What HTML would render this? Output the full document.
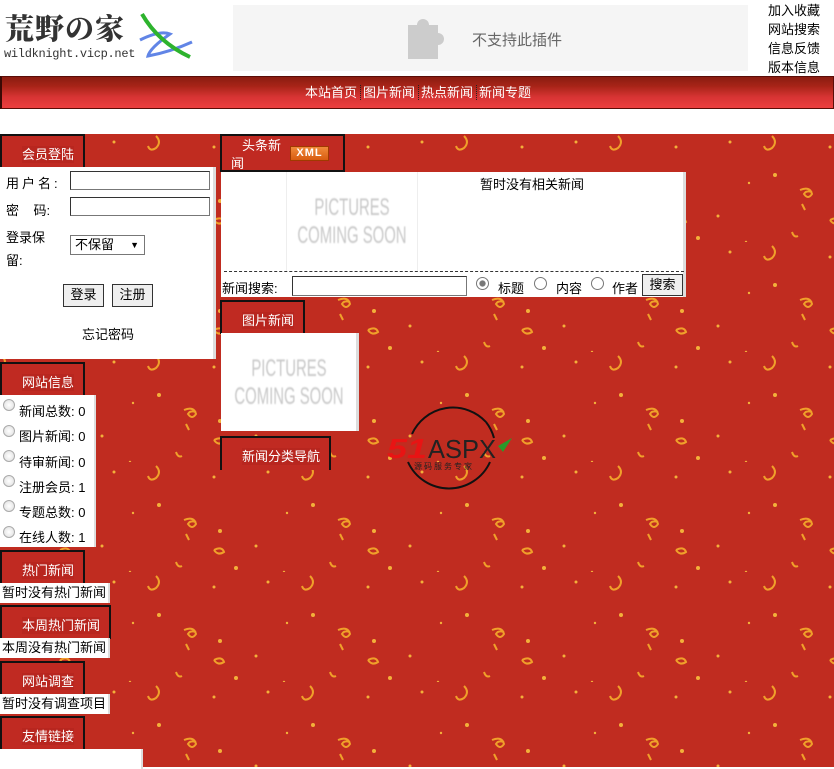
<!DOCTYPE html>
<html><head><meta charset="utf-8">
<style>
*{margin:0;padding:0;box-sizing:border-box}
body{width:834px;height:767px;overflow:hidden;position:relative;background:#fff;font-family:"Liberation Sans","Noto Sans CJK SC",sans-serif;font-size:13px;color:#000}
.abs{position:absolute}
.nav{left:0;top:76px;width:834px;height:33px;background:linear-gradient(#8a1c10,#a82418 30%,#d83434 65%,#ec3e3e);border:1px solid #5a0d08;border-left:2px solid #3a0a05;color:#fff;text-align:center;line-height:32px;font-size:13px}
.nav span{padding:0 2px;border-left:1px dotted #222;margin-left:1px}
.nav span:first-child{border:none}
.tab{background:#c02a22;border:2px solid #111;border-bottom:none;color:#fff;font-size:13px}
.tab b{font-weight:normal;background:#b8261f;padding:1px 0}
.wbox{background:#fff;border-right:3px solid #ddd}
input.t{position:absolute;height:19px;border:1px solid #333;border-right-color:#777;border-bottom-color:#777;background:#fff}
.btn{position:absolute;background:#efefef;border:1px solid #333;font-size:13px;text-align:center;line-height:20px}
.rad{position:absolute;width:12px;height:12px;border-radius:50%;border:1px solid #aaa;background:radial-gradient(#fff,#ddd)}
.pic{color:#c8c8c8;font-family:"Liberation Sans Narrow","Liberation Sans",sans-serif;text-align:center;filter:blur(0.7px);font-size:24px;line-height:28px;white-space:nowrap;transform:scaleX(0.62);transform-origin:center;width:200px}
</style></head><body>

<div class="abs" style="left:5px;top:11px;font-family:'Noto Serif CJK SC',serif;font-size:29px;font-weight:900;color:#333;letter-spacing:1px;line-height:34px">荒野の家</div>
<div class="abs" style="left:4px;top:47px;font-family:'Liberation Mono',monospace;font-size:12px;color:#333;letter-spacing:-0.3px">wildknight.vicp.net</div>
<svg class="abs" style="left:130px;top:12px" width="65" height="50"><path d="M10 28 Q30 18 40 22 Q20 36 18 44 Q40 40 62 30" stroke="#3a66e0" stroke-width="3" fill="none" opacity=".8"/><path d="M12 2 Q28 30 60 45" stroke="#2db32d" stroke-width="4" fill="none"/></svg>

<div class="abs" style="left:233px;top:5px;width:515px;height:66px;background:#f5f5f5"></div>
<svg class="abs" style="left:406px;top:13px" width="50" height="50" viewBox="0 0 50 50"><path d="M2 12 H11 A6 6 0 1 1 23 12 H32 V20 A6 6 0 1 1 32 32 V46 H2 Z" fill="#ccc"/></svg>
<div class="abs" style="left:472px;top:29px;font-size:15px;color:#666">不支持此插件</div>
<div class="abs" style="left:768px;top:1px;font-size:13px;line-height:19px">加入收藏<br>网站搜索<br>信息反馈<br>版本信息</div>

<div class="abs nav"><span>本站首页</span><span>图片新闻</span><span>热点新闻</span><span>新闻专题</span></div>

<svg class="abs" style="left:0;top:134px" width="834" height="633">
<defs><pattern id="p" width="154" height="110" patternUnits="userSpaceOnUse" x="-10" y="-2">
<rect width="154" height="110" fill="#c02c20"/>
<g stroke="#f0a02a" stroke-width="2" fill="none">
<path d="M12 4 q6 6 0 12 q-6 4 -8 -2"/>
<path d="M40 58 q10 -4 12 4 q-4 6 -8 0 q2 -4 8 -2"/>
<path d="M70 88 q8 -4 10 2 q-6 4 -10 -2"/>
<path d="M32 100 q2 6 6 4"/>
<path d="M42 72 l3 6"/>
</g>
<g fill="#f3b03a"><circle cx="70" cy="15" r="1.5"/><circle cx="15" cy="43" r="2"/><circle cx="76" cy="69" r="2"/><circle cx="112" cy="84" r="1.5"/><circle cx="143" cy="51" r="1.2"/><circle cx="92" cy="106" r="2"/><circle cx="124" cy="10" r="1.5"/><circle cx="140" cy="110" r="1.2"/></g>
</pattern></defs>
<rect width="834" height="633" fill="url(#p)"/>
</svg>

<div class="abs tab" style="left:0;top:134px;width:85px;height:34px;padding:8px 0 0 20px"><b>会员登陆</b></div>
<div class="abs wbox" style="left:0;top:167px;width:216px;height:192px"></div>
<div class="abs" style="left:6px;top:173px;font-size:13px;letter-spacing:3px">用户名:</div>
<input class="t" style="left:70px;top:171px;width:140px">
<div class="abs" style="left:6px;top:200px;font-size:13px">密&nbsp;&nbsp;&nbsp;&nbsp;码:</div>
<input class="t" style="left:70px;top:197px;width:140px">
<div class="abs" style="left:6px;top:226px;font-size:13px;line-height:23px;width:50px">登录保<br>留:</div>
<div class="abs" style="left:70px;top:235px;width:75px;height:20px;border:1px solid #777;background:#fff;font-size:13px;line-height:18px;padding-left:4px">不保留<span style="position:absolute;right:5px;font-size:9px">&#9660;</span></div>
<div class="btn" style="left:63px;top:284px;width:41px;height:23px">登录</div>
<div class="btn" style="left:112px;top:284px;width:41px;height:23px">注册</div>
<div class="abs" style="left:82px;top:324px;font-size:13px">忘记密码</div>

<div class="abs tab" style="left:0;top:362px;width:85px;height:34px;padding:8px 0 0 20px"><b>网站信息</b></div>
<div class="abs wbox" style="left:0;top:395px;width:96px;height:152px;border-right-width:2px"></div>
<div class="abs" style="left:19px;top:399px;font-size:13px;line-height:25.3px">新闻总数:&nbsp;0<br>图片新闻:&nbsp;0<br>待审新闻:&nbsp;0<br>注册会员:&nbsp;1<br>专题总数:&nbsp;0<br>在线人数:&nbsp;1</div>
<div class="rad" style="left:3px;top:399px"></div><div class="rad" style="left:3px;top:425px"></div><div class="rad" style="left:3px;top:450px"></div><div class="rad" style="left:3px;top:475px"></div><div class="rad" style="left:3px;top:500px"></div><div class="rad" style="left:3px;top:526px"></div>

<div class="abs tab" style="left:0;top:550px;width:85px;height:34px;padding:8px 0 0 20px"><b>热门新闻</b></div>
<div class="abs" style="left:0;top:583px;width:110px;height:20px;background:#fff;border-right:2px solid #ddd;font-size:13px;line-height:20px;padding-left:2px">暂时没有热门新闻</div>
<div class="abs tab" style="left:0;top:605px;width:111px;height:34px;padding:8px 0 0 20px"><b>本周热门新闻</b></div>
<div class="abs" style="left:0;top:638px;width:110px;height:20px;background:#fff;border-right:2px solid #ddd;font-size:13px;line-height:20px;padding-left:2px">本周没有热门新闻</div>
<div class="abs tab" style="left:0;top:661px;width:85px;height:34px;padding:8px 0 0 20px"><b>网站调查</b></div>
<div class="abs" style="left:0;top:694px;width:110px;height:20px;background:#fff;border-right:2px solid #ddd;font-size:13px;line-height:20px;padding-left:2px">暂时没有调查项目</div>
<div class="abs tab" style="left:0;top:716px;width:85px;height:34px;padding:8px 0 0 20px"><b>友情链接</b></div>
<div class="abs" style="left:0;top:749px;width:143px;height:20px;background:#fff;border-right:2px solid #ddd"></div>

<div class="abs tab" style="left:220px;top:134px;width:125px;height:38px;border-bottom:2px solid #111"></div>
<div class="abs" style="left:242px;top:135px;color:#fff;font-size:13px">头条新</div>
<div class="abs" style="left:231px;top:153px;color:#fff;font-size:13px">闻</div>
<div class="abs" style="left:290px;top:146px;width:39px;height:15px;background:linear-gradient(#f08a3a,#d85c10);border:1px solid #a03a00;color:#fff;font-weight:bold;font-size:11px;text-align:center;line-height:13px;letter-spacing:1px">XML</div>
<div class="abs wbox" style="left:221px;top:172px;width:465px;height:125px"></div>
<div class="abs" style="left:286px;top:172px;width:132px;height:99px;border-left:1px solid #eee;border-right:1px solid #eee"></div>
<div class="abs pic" style="left:252px;top:194px">PICTURES<br>COMING SOON</div>
<div class="abs" style="left:480px;top:174px;font-size:13px">暂时没有相关新闻</div>
<div class="abs" style="left:224px;top:271px;width:460px;border-top:1px dashed #333"></div>
<div class="abs" style="left:222px;top:278px;font-size:13px">新闻搜索:</div>
<input class="t" style="left:292px;top:276px;width:175px;height:20px">
<div class="abs" style="left:476px;top:277px;width:13px;height:13px;border-radius:50%;border:1px solid #777;background:radial-gradient(#777 35%,#fff 45%)"></div>
<div class="abs" style="left:498px;top:278px;font-size:13px">标题</div>
<div class="abs" style="left:534px;top:277px;width:13px;height:13px;border-radius:50%;border:1px solid #777;background:#fff"></div>
<div class="abs" style="left:556px;top:278px;font-size:13px">内容</div>
<div class="abs" style="left:591px;top:277px;width:13px;height:13px;border-radius:50%;border:1px solid #777;background:#fff"></div>
<div class="abs" style="left:612px;top:278px;font-size:13px">作者</div>
<div class="btn" style="left:642px;top:274px;width:41px;height:22px">搜索</div>

<div class="abs tab" style="left:220px;top:300px;width:85px;height:34px;padding:8px 0 0 20px"><b>图片新闻</b></div>
<div class="abs wbox" style="left:221px;top:333px;width:138px;height:98px;border-right:3px solid #ddd"></div>
<div class="abs pic" style="left:189px;top:355px">PICTURES<br>COMING SOON</div>
<div class="abs tab" style="left:220px;top:436px;width:111px;height:34px;padding:8px 0 0 20px"><b>新闻分类导航</b></div>

<svg class="abs" style="left:386px;top:402px" width="128" height="92">
<path d="M26 32 A45 45 0 0 1 100 20" stroke="#111" stroke-width="2" fill="none"/>
<path d="M100 20 A45 45 0 0 1 108 36" stroke="#111" stroke-width="2" fill="none"/>
<path d="M22 60 A45 45 0 0 0 104 60" stroke="#111" stroke-width="2" fill="none"/>
<text x="1" y="56" font-family="Liberation Sans,sans-serif" font-size="28" font-style="italic" font-weight="bold" fill="#e81414" textLength="40" lengthAdjust="spacingAndGlyphs">51</text>
<text x="42" y="56" font-family="Liberation Sans,sans-serif" font-size="26" fill="#222" textLength="68" lengthAdjust="spacingAndGlyphs">ASPX</text>
<path d="M112 44 L126 36 L117 50 Z" fill="#2a9a2a"/>
<text x="28" y="67" font-family="Noto Sans CJK SC,sans-serif" font-size="8" fill="#222" letter-spacing="2">源码服务专家</text>
</svg>

</body></html>
